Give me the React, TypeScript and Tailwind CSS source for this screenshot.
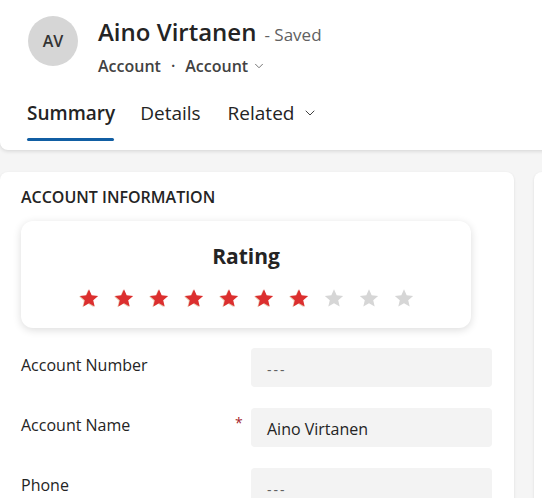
import React from 'react';
import { ChevronDown } from 'lucide-react';

const font = { fontFamily: '"Open Sans", "Noto Sans", sans-serif' };

const Star: React.FC<{ on: boolean }> = ({ on }) => (
  <svg width="22" height="22" viewBox="0 0 24 24" className="shrink-0">
    {on && (
      <path
        d="M12 2.5l2.9 6.6 7.1.6-5.4 4.7 1.6 7-6.2-3.7-6.2 3.7 1.6-7L2 9.7l7.1-.6z"
        fill="#e8c9b0"
        transform="translate(-1 0.6)"
      />
    )}
    <path
      d="M12 2.5l2.9 6.6 7.1.6-5.4 4.7 1.6 7-6.2-3.7-6.2 3.7 1.6-7L2 9.7l7.1-.6z"
      fill={on ? '#dc2f2f' : '#d6d6d6'}
    />
  </svg>
);

const Field: React.FC<{ label: string; value?: string; required?: boolean }> = ({
  label,
  value,
  required,
}) => (
  <div className="flex items-start h-[60px]">
    <div className="w-[214px] pt-[5px] text-[16px] text-[#242424]">{label}</div>
    <div className="w-[16px] text-[#a4262c] text-[14px] pt-[4px]">{required ? '*' : ''}</div>
    <div className="w-[241px] h-[39px] rounded-[4px] bg-[#f3f3f3] flex items-center px-[16px] text-[16px]">
      {value ? (
        <span className="text-[#242424] pt-[3px]">{value}</span>
      ) : (
        <span className="text-[#616161] text-[14px] tracking-[2px] pt-[3px]">---</span>
      )}
    </div>
  </div>
);

export default function App() {
  const rating = 7;
  return (
    <div className="w-[542px] h-[498px] overflow-hidden bg-[#f5f5f5]" style={font}>
      <header className="w-[560px] h-[150px] bg-white rounded-b-[8px] shadow-[0_1px_4px_rgba(0,0,0,0.14)] pt-[16px]">
        <div className="flex pl-[28px]">
          <div className="w-[50px] h-[50px] rounded-full bg-[#d6d6d6] flex items-center justify-center text-[16px] font-semibold text-[#333]">
            AV
          </div>
          <div className="ml-[20px] -mt-[2px]">
            <div className="flex items-baseline">
              <span className="text-[24px] font-semibold text-[#242424]">Aino Virtanen</span>
              <span className="ml-[8px] text-[17px] text-[#616161]">- Saved</span>
            </div>
            <div className="flex items-center text-[16px] font-semibold text-[#424242] mt-[4px]">
              <span>Account</span>
              <span className="mx-[10px]">·</span>
              <span>Account</span>
              <ChevronDown className="ml-[4px] w-[14px] h-[14px] text-[#616161]" strokeWidth={1.5} />
            </div>
          </div>
        </div>
        <nav className="flex items-start pl-[27px] mt-[22px] text-[19px] text-[#242424] leading-[26px]">
          <div className="flex flex-col">
            <span className="font-semibold">Summary</span>
            <span className="mt-[12px] h-[3px] w-[87px] rounded-full bg-[#115ea3]" />
          </div>
          <span className="ml-[25px]">Details</span>
          <span className="ml-[27px] flex items-center">
            Related
            <ChevronDown className="ml-[8px] w-[16px] h-[16px] text-[#424242]" strokeWidth={1.5} />
          </span>
        </nav>
      </header>

      <div className="flex gap-[20px] mt-[22px]">
        <section className="w-[514px] shrink-0 h-[400px] bg-white rounded-[8px] shadow-[0_1px_3px_rgba(0,0,0,0.1)] pl-[21px] pt-[13px]">
          <h2 className="text-[16px] font-semibold text-[#242424]">ACCOUNT INFORMATION</h2>
          <div className="mt-[12px] w-[450px] h-[107px] rounded-[12px] bg-white shadow-[0_2px_8px_rgba(0,0,0,0.14)] flex flex-col items-center pt-[21px]">
            <div className="text-[21px] font-bold text-[#242424] leading-[28px]">Rating</div>
            <div className="flex gap-[13px] mt-[17px]">
              {Array.from({ length: 10 }).map((_, i) => (
                <Star key={i} on={i < rating} />
              ))}
            </div>
          </div>
          <div className="mt-[20px]">
            <Field label="Account Number" />
            <Field label="Account Name" value="Aino Virtanen" required />
            <Field label="Phone" />
          </div>
        </section>
        <section className="w-[200px] shrink-0 h-[400px] bg-white rounded-[8px] shadow-[0_1px_3px_rgba(0,0,0,0.1)]" />
      </div>
    </div>
  );
}
